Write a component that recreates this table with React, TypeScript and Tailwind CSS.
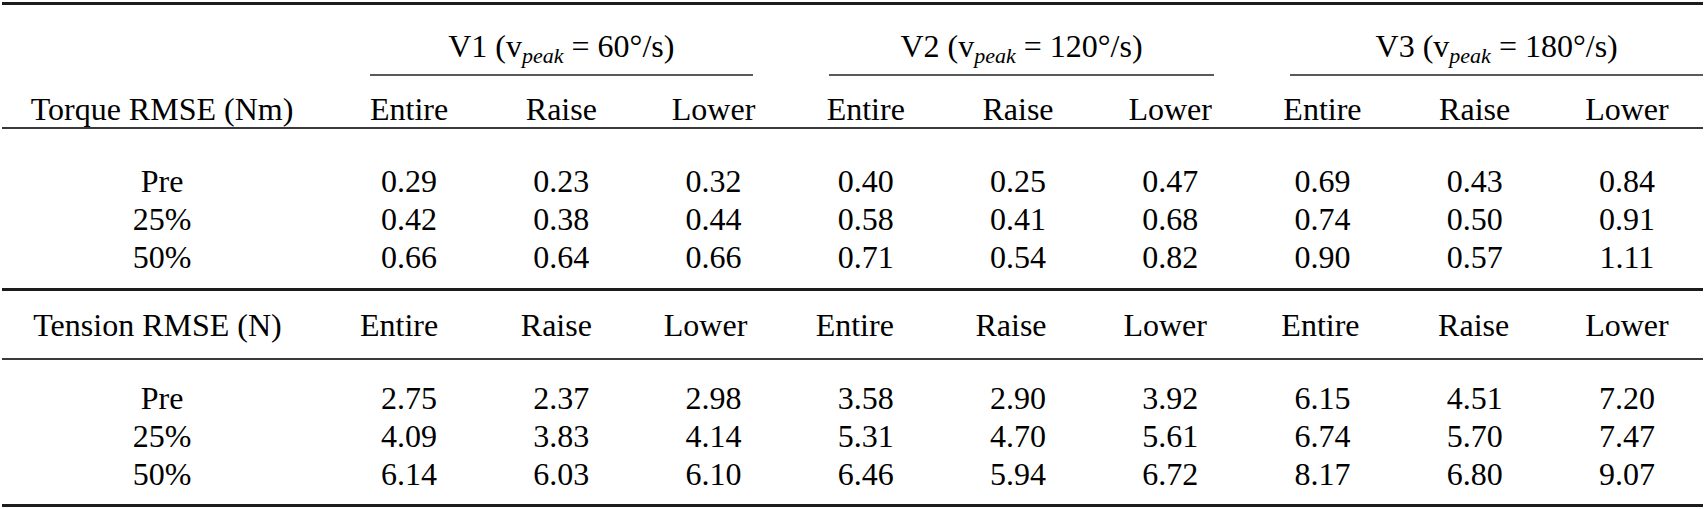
const groups = [
  { name: 'V1', speed: '60°/s', line: 'ml-[37px] mr-[37px]' },
  { name: 'V2', speed: '120°/s', line: 'ml-[39px] mr-[32px]' },
  { name: 'V3', speed: '180°/s', line: 'ml-[44px] mr-0' },
]

const parts = ['Entire', 'Raise', 'Lower']
const heads = [...parts, ...parts, ...parts]

// tension header sits a little left of the data columns
const tensionShift = ['pr-[20px]', 'pr-[10px]', 'pr-[16px]', 'pr-[22px]', 'pr-[14px]', 'pr-[10px]', 'pr-[4px]', 'pr-[2px]', '']

const torque: [string, string[]][] = [
  ['Pre', ['0.29', '0.23', '0.32', '0.40', '0.25', '0.47', '0.69', '0.43', '0.84']],
  ['25%', ['0.42', '0.38', '0.44', '0.58', '0.41', '0.68', '0.74', '0.50', '0.91']],
  ['50%', ['0.66', '0.64', '0.66', '0.71', '0.54', '0.82', '0.90', '0.57', '1.11']],
]

const tension: [string, string[]][] = [
  ['Pre', ['2.75', '2.37', '2.98', '3.58', '2.90', '3.92', '6.15', '4.51', '7.20']],
  ['25%', ['4.09', '3.83', '4.14', '5.31', '4.70', '5.61', '6.74', '5.70', '7.47']],
  ['50%', ['6.14', '6.03', '6.10', '6.46', '5.94', '6.72', '8.17', '6.80', '9.07']],
]

const row = 'grid grid-cols-[331px_repeat(9,minmax(0,1fr))]'

function DataRows({ rows }: { rows: [string, string[]][] }) {
  return (
    <>
      {rows.map(([label, vals]) => (
        <div key={label} className={`${row} leading-[38px]`}>
          <div className="text-center pr-[11px]">{label}</div>
          {vals.map((v, i) => (
            <div key={i} className="text-center">{v}</div>
          ))}
        </div>
      ))}
    </>
  )
}

export default function App() {
  return (
    <div className="w-[1705px] h-[509px] bg-white pt-[2px] px-[2px] [font-family:Liberation_Serif,serif] text-[32px] text-black">
      <div className="border-t-[3px] border-b-[3px] border-[#1c1c1c]">
        {/* group titles */}
        <div className={row}>
          <div />
          {groups.map((g) => (
            <div key={g.name} className={`col-span-3 ${g.line} pt-[22px] pb-[9px] border-b-2 border-[#5a5a5a] text-center leading-[38px]`}>
              {g.name} (v<sub className="italic text-[22px]">peak</sub> = {g.speed})
            </div>
          ))}
        </div>

        {/* torque header */}
        <div className={`${row} pt-[15px] leading-[36px] border-b-2 border-[#3a3a3a]`}>
          <div className="text-center pr-[11px]">Torque RMSE (Nm)</div>
          {heads.map((h, i) => (
            <div key={i} className="text-center">{h}</div>
          ))}
        </div>

        <div className="pt-[33px] pb-[12px] border-b-[3px] border-[#1c1c1c]">
          <DataRows rows={torque} />
        </div>

        {/* tension header */}
        <div className={`${row} pt-[15px] pb-[14px] leading-[38px] border-b-2 border-[#3a3a3a]`}>
          <div className="text-center pr-[20px]">Tension RMSE (N)</div>
          {heads.map((h, i) => (
            <div key={i} className={`text-center ${tensionShift[i]}`}>{h}</div>
          ))}
        </div>

        <div className="pt-[19px] pb-[11px]">
          <DataRows rows={tension} />
        </div>
      </div>
    </div>
  )
}
